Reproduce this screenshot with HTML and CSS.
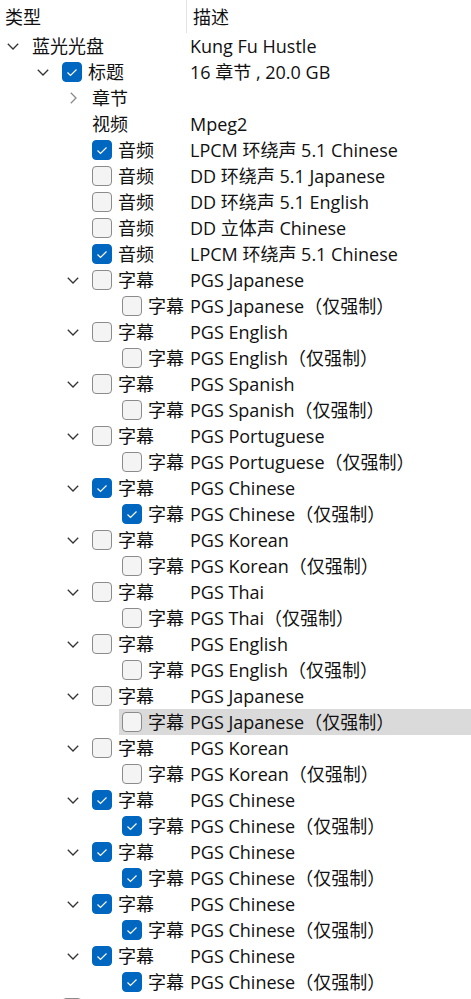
FILE: index.html
```html
<!DOCTYPE html>
<html>
<head>
<meta charset="utf-8">
<link rel="stylesheet" href="styles.css">
</head>
<body>
<div class="tree">
  <div class="head">
    <div class="hcol type-h">类型</div>
    <div class="hcol desc-h">描述</div>
  </div>
  <div class="rows" id="rows"></div>
</div>
<script src="app.js"></script>
</body>
</html>
```

FILE: app.js
```javascript
var DOWN = '<svg width="12" height="7" viewBox="0 0 12 7"><polyline points="0.8,0.8 6,6 11.2,0.8" fill="none" stroke="#333" stroke-width="1.3"/></svg>';
var RIGHT = '<svg width="7" height="12" viewBox="0 0 7 12"><polyline points="0.8,0.8 6,6 0.8,11.2" fill="none" stroke="#8a8a8a" stroke-width="1.3"/></svg>';
var CHECK = '<svg width="20" height="20" viewBox="0 0 20 20"><polyline points="5.5,10.5 8.5,13.5 14.5,7.5" fill="none" stroke="#fff" stroke-width="1.2"/></svg>';

var data = [
  [1, 'd', null, '蓝光光盘', 'Kung Fu Hustle'],
  [2, 'd', 1, '标题', '16 章节 , 20.0 GB'],
  [3, 'r', null, '章节', ''],
  [3, null, null, '视频', 'Mpeg2'],
  [3, null, 1, '音频', 'LPCM 环绕声 5.1 Chinese'],
  [3, null, 0, '音频', 'DD 环绕声 5.1 Japanese'],
  [3, null, 0, '音频', 'DD 环绕声 5.1 English'],
  [3, null, 0, '音频', 'DD 立体声 Chinese'],
  [3, null, 1, '音频', 'LPCM 环绕声 5.1 Chinese']
];
var subs = [
  ['Japanese', 0], ['English', 0], ['Spanish', 0], ['Portuguese', 0],
  ['Chinese', 1], ['Korean', 0], ['Thai', 0], ['English', 0],
  ['Japanese', 0, true], ['Korean', 0], ['Chinese', 1], ['Chinese', 1],
  ['Chinese', 1], ['Chinese', 1]
];
subs.forEach(function (s) {
  data.push([3, 'd', s[1], '字幕', 'PGS ' + s[0]]);
  data.push([4, null, s[1], '字幕', 'PGS ' + s[0] + '（仅强制）', s[2]]);
});
data.push([2, 'r', 0, '', '']);

var html = '';
data.forEach(function (r) {
  var exp = r[1] === 'd' ? DOWN : (r[1] === 'r' ? RIGHT : '');
  var cb = '';
  if (r[2] === 1) cb = '<span class="cb on">' + CHECK + '</span>';
  else if (r[2] === 0) cb = '<span class="cb"></span>';
  html += '<div class="row lv' + r[0] + (r[5] ? ' sel' : '') + '">' +
    '<div class="type"><span class="exp">' + exp + '</span>' + cb +
    '<span class="tt">' + r[3] + '</span></div>' +
    '<div class="desc">' + r[4] + '</div></div>';
});
document.getElementById('rows').innerHTML = html;
```

FILE: styles.css
```css
html, body {
  margin: 0;
  padding: 0;
  background: #ffffff;
}
body {
  font-family: "Open Sans", "Noto Sans CJK SC", sans-serif;
  font-size: 18px;
  color: #111111;
  overflow: hidden;
  height: 999px;
}
.tree {
  width: 471px;
}
.head {
  display: flex;
  height: 33px;
}
.hcol {
  display: flex;
  align-items: center;
  height: 31px;
  padding-bottom: 2px;
}
.type-h {
  width: 181px;
  padding-left: 5px;
}
.desc-h {
  border-left: 1px solid #e3e3e3;
  padding-left: 6px;
  flex: 1;
}
.row {
  display: flex;
  align-items: center;
  height: 26px;
  white-space: nowrap;
}
.row.sel {
  background: linear-gradient(to right, transparent 119px, #dadada 119px);
}
.type {
  display: flex;
  align-items: center;
  width: 190px;
  flex: none;
  box-sizing: border-box;
}
.lv1 .type { padding-left: 0; }
.lv2 .type { padding-left: 30px; }
.lv3 .type { padding-left: 60px; }
.lv4 .type { padding-left: 90px; }
.exp {
  width: 32px;
  flex: none;
  display: flex;
  align-items: center;
  padding-left: 7px;
  box-sizing: border-box;
  height: 26px;
}
.lv3 .exp svg[width="7"] {
  margin-left: 3px;
}
.cb {
  width: 20px;
  height: 20px;
  box-sizing: border-box;
  border: 1px solid #8b8b8b;
  border-radius: 4px;
  background: #f4f4f4;
  margin-right: 6px;
  flex: none;
  display: block;
}
.cb.on {
  background: #0067c0;
  border-color: #0067c0;
}
.cb.on svg {
  display: block;
  margin: -1px;
}
.tt {
  line-height: 26px;
}
.desc {
  flex: 1;
  line-height: 26px;
}
```
